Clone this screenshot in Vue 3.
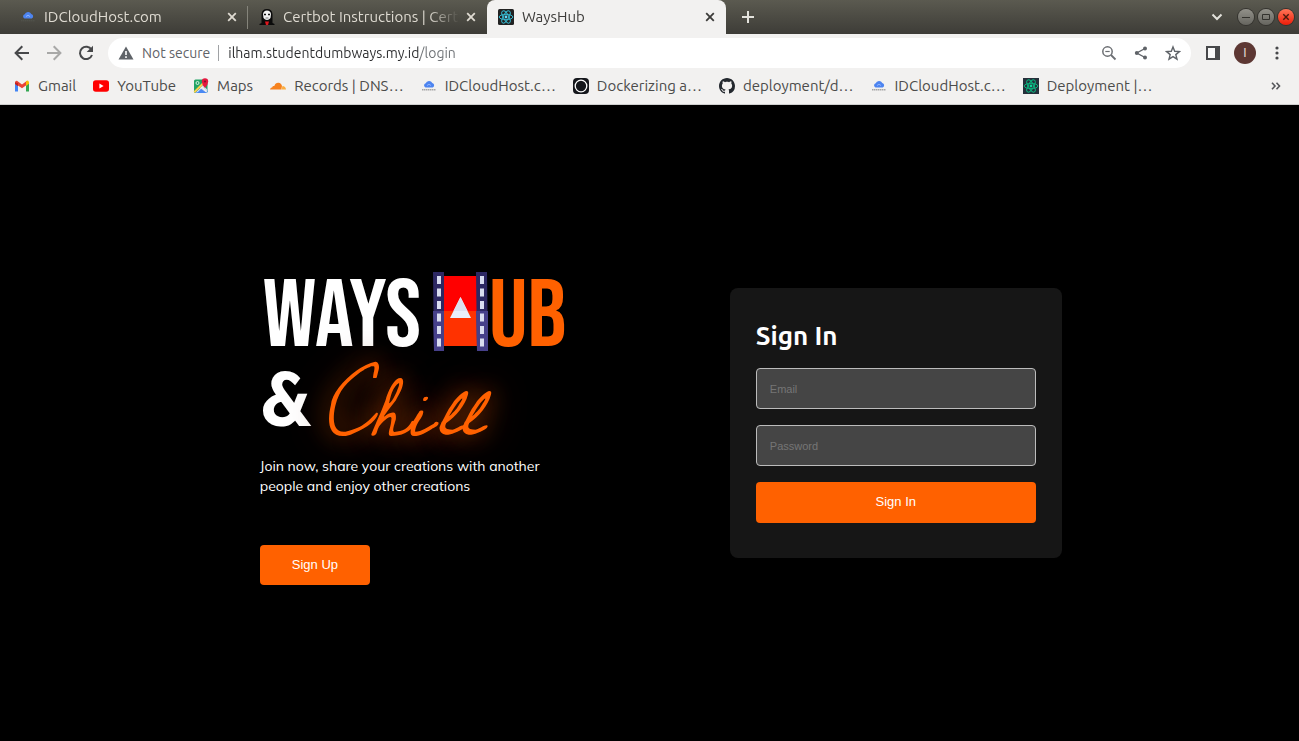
<script setup>
import { ref } from 'vue'

const url = ref('ilham.studentdumbways.my.id/login')
const email = ref('')
const password = ref('')

const tabs = [
  { title: 'IDCloudHost.com', icon: 'cloud', active: false },
  { title: 'Certbot Instructions | Cert', icon: 'certbot', active: false },
  { title: 'WaysHub', icon: 'react', active: true },
]

const bookmarks = [
  { title: 'Gmail', icon: 'gmail' },
  { title: 'YouTube', icon: 'youtube' },
  { title: 'Maps', icon: 'maps' },
  { title: 'Records | DNS…', icon: 'cloudflare' },
  { title: 'IDCloudHost.c…', icon: 'cloud' },
  { title: 'Dockerizing a…', icon: 'ring' },
  { title: 'deployment/d…', icon: 'github' },
  { title: 'IDCloudHost.c…', icon: 'cloud' },
  { title: 'Deployment |…', icon: 'reactgreen' },
]
</script>

<template>
  <div class="window">
    <svg class="defs" width="0" height="0" aria-hidden="true">
      <symbol id="i-cloud" viewBox="0 0 16 16">
        <path d="M4.500 9.500a2.200 2.200 0 0 1 .2-4.200A3.600 3.600 0 0 1 11.300 5a2.400 2.400 0 0 1 .5 4.500z" fill="#4d84f0" />
        <path d="M6 7.500q2-2.500 4 0" fill="none" stroke="#8fb4ff" />
        <path d="M1 11.800h14" stroke="#a5a5a5" stroke-width="1.600" stroke-dasharray="1.500 .5" />
      </symbol>
      <symbol id="i-cloudtab" viewBox="0 0 16 16">
        <path d="M4.500 9.500a2.200 2.200 0 0 1 .2-4.200A3.600 3.600 0 0 1 11.300 5a2.400 2.400 0 0 1 .5 4.500z" fill="#4d84f0" />
        <path d="M6 7.500q2-2.500 4 0" fill="none" stroke="#8fb4ff" />
        <path d="M1 11.800h14" stroke="#55564f" stroke-dasharray="1.500 .5" />
      </symbol>
      <symbol id="i-certbot" viewBox="0 0 16 16">
        <path d="M2.500 14V5Q3 0 8 0t5.500 5v9l2 1v1H.5v-1z" fill="#0b0b0b" />
        <path d="M4 5q.5-3.500 4-3.500T12 5l-.5 4Q10 11 8 11T4.500 9z" fill="#f3f3f3" />
        <path d="M5 5.500h2M9 5.500h2" stroke="#111" stroke-width="1.400" />
        <path d="M6.500 9h3" stroke="#777" />
        <path d="M6 12.500h4l-1 3.500H7z" fill="#e0161c" />
      </symbol>
      <symbol id="i-react" viewBox="0 0 16 16">
        <rect width="16" height="16" rx="1.500" fill="#222" />
        <g fill="none" stroke="#35b9d0">
          <ellipse cx="8" cy="8" rx="6.800" ry="2.700" />
          <ellipse cx="8" cy="8" rx="6.800" ry="2.700" transform="rotate(60 8 8)" />
          <ellipse cx="8" cy="8" rx="6.800" ry="2.700" transform="rotate(120 8 8)" />
        </g>
        <circle cx="8" cy="8" r="1.400" fill="#61dafb" />
      </symbol>
      <symbol id="i-reactgreen" viewBox="0 0 16 16">
        <rect width="16" height="16" fill="#25303b" />
        <g fill="none" stroke="#0bb57f">
          <ellipse cx="8" cy="8" rx="6.800" ry="2.700" />
          <ellipse cx="8" cy="8" rx="6.800" ry="2.700" transform="rotate(60 8 8)" />
          <ellipse cx="8" cy="8" rx="6.800" ry="2.700" transform="rotate(120 8 8)" />
        </g>
        <circle cx="8" cy="8" r="1.400" fill="#10d79a" />
      </symbol>
      <symbol id="i-gmail" viewBox="0 0 16 16">
        <path d="M1 4v9.500h3V7z" fill="#4285f4" />
        <path d="M15 4v9.500h-3V7z" fill="#34a853" />
        <path d="M1 4.500Q1 2.500 3 2.700L8 6.500l5-3.800v4L8 10.300 1 5.500z" fill="#ea4335" />
        <path d="M12 3.400q2.500-2 3 1v1.300l-3 2.200z" fill="#fbbc04" />
        <path d="M1 4.400V6l3 2.200V5z" fill="#c5221f" />
      </symbol>
      <symbol id="i-youtube" viewBox="0 0 16 16">
        <rect y="2.200" width="16" height="11.600" rx="2.800" fill="#f00" />
        <path d="M6.400 5.500v5L10.600 8z" fill="#fff" />
      </symbol>
      <symbol id="i-maps" viewBox="0 0 16 16">
        <rect x="1" y="1.500" width="13.500" height="13.500" rx="1.500" fill="#21a464" />
        <path d="M2 15 10 7l4.500 5v1.500q0 1.500-1.500 1.500z" fill="#4a89f3" />
        <path d="m7 10 3-3 4.500 5-1.300 2.500z" fill="#d9dde3" />
        <path d="M1.300 14.300 13 2.500" stroke="#fbd04a" stroke-width="2" />
        <path d="M3.800 14.500 9 9.300l5 5.200" fill="none" stroke="#fff" />
        <circle cx="4.500" cy="5" r="1.500" fill="none" stroke="#d8f2e4" />
        <path d="M12 10Q8.800 6.500 8.800 3.500a3.200 3.200 0 0 1 6.400 0Q15.200 6.500 12 10z" fill="#e5173f" />
        <circle cx="12" cy="3.500" r="1.100" fill="#86132b" />
      </symbol>
      <symbol id="i-cloudflare" viewBox="0 0 16 16">
        <path d="M0 11.500q.2-2 2.300-2.200.2-1.700 2-1.300Q5.500 4.500 8.500 4.700q2.800.3 3.500 3.300l-.7 3.500z" fill="#f6821f" />
        <path d="M11.500 11.500 12.500 8q3 0 3.500 3.500z" fill="#fbad41" />
      </symbol>
      <symbol id="i-ring" viewBox="0 0 16 16">
        <rect width="16" height="16" rx="4" fill="#15171c" />
        <circle cx="8" cy="8" r="5.800" fill="none" stroke="#fff" stroke-width="1.300" />
      </symbol>
      <symbol id="i-github" viewBox="0 0 16 16">
        <path fill="#24292f" d="M8 0C3.580 0 0 3.580 0 8c0 3.540 2.290 6.530 5.470 7.590.4.070.55-.17.55-.38 0-.19-.01-.82-.01-1.490-2.010.37-2.530-.49-2.690-.94-.09-.23-.48-.94-.82-1.130-.28-.15-.68-.52-.01-.53.63-.01 1.080.58 1.230.82.72 1.210 1.870.87 2.330.66.07-.52.28-.87.51-1.070-1.780-.2-3.640-.89-3.640-3.950 0-.87.31-1.590.82-2.150-.08-.2-.36-1.020.08-2.120 0 0 .67-.21 2.200.82.64-.18 1.320-.27 2-.27s1.360.09 2 .27c1.530-1.040 2.200-.82 2.200-.82.44 1.100.16 1.920.08 2.120.51.56.82 1.270.82 2.150 0 3.070-1.870 3.750-3.650 3.950.29.25.54.73.54 1.480 0 1.070-.01 1.930-.01 2.200 0 .21.15.46.55.38A8.010 8.010 0 0 0 16 8c0-4.420-3.580-8-8-8z" />
      </symbol>
    </svg>

    <header class="browser">
      <div class="tabbar">
        <div v-for="tab in tabs" :key="tab.title" class="tab" :class="{ active: tab.active }">
          <svg class="ico"><use :href="tab.icon === 'cloud' ? '#i-cloudtab' : '#i-' + tab.icon" /></svg>
          <span class="tab-title">{{ tab.title }}</span>
          <button class="close" :aria-label="'Close ' + tab.title">
            <svg width="10" height="10" viewBox="0 0 10 10"><path d="m1.200 1.200 7.600 7.600m0-7.600L1.200 8.800" fill="none" stroke="currentColor" stroke-width="1.800" /></svg>
          </button>
        </div>
        <button class="newtab" aria-label="New tab">
          <svg width="12" height="12" viewBox="0 0 12 12"><path d="M6 0v12M0 6h12" stroke="#e3e2dc" stroke-width="2" /></svg>
        </button>
        <div class="controls">
          <button class="search-tabs" aria-label="Search tabs">
            <svg width="12" height="12" viewBox="0 0 12 12"><path d="m1.500 3.500 4.500 4.500 4.500-4.500" fill="none" stroke="#e3e2dc" stroke-width="2" /></svg>
          </button>
          <button class="win" aria-label="Minimise"><svg width="16" height="16" viewBox="0 0 16 16"><path d="M4 8.500h8" stroke="#33322e" /></svg></button>
          <button class="win" aria-label="Maximise"><svg width="16" height="16" viewBox="0 0 16 16"><path d="M4.500 5.500h7v5h-7z" fill="none" stroke="#33322e" /></svg></button>
          <button class="win quit" aria-label="Close window"><svg width="16" height="16" viewBox="0 0 16 16"><path d="m5.300 5.300 5.400 5.400m0-5.400-5.400 5.400" stroke="#4a1a0c" stroke-width="1.400" /></svg></button>
        </div>
      </div>

      <div class="toolbar">
        <button aria-label="Back"><svg width="20" height="20" viewBox="0 0 20 20"><path d="M17 10H4m6.300-6.700L3.600 10l6.700 6.700" fill="none" stroke="#47484a" stroke-width="2" /></svg></button>
        <button aria-label="Forward"><svg width="20" height="20" viewBox="0 0 20 20"><path d="M3 10h13M9.700 3.300l6.700 6.700-6.700 6.700" fill="none" stroke="#a8a8a7" stroke-width="2" /></svg></button>
        <button aria-label="Reload"><svg width="20" height="20" viewBox="0 0 20 20"><path d="M15.500 6.700A6.200 6.200 0 1 0 16 12" fill="none" stroke="#47484a" stroke-width="2" /><path d="M17 2.700V9h-6.300z" fill="#47484a" /></svg></button>
        <div class="omnibox">
          <svg width="16" height="16" viewBox="0 0 16 16"><path d="M8 1.500 15.500 14.500H.5z" fill="#5f6368" /><path d="M8 6v4m0 1.200v1.800" stroke="#fff" stroke-width="1.600" /></svg>
          <span class="insecure">Not secure</span>
          <input v-model="url" class="url" type="text" aria-label="Address" />
          <button aria-label="Zoom"><svg width="16" height="16" viewBox="0 0 16 16"><circle cx="6.500" cy="6.500" r="4.700" fill="none" stroke="#6c6f73" stroke-width="1.500" /><path d="m10 10 4.500 4.500" stroke="#6c6f73" stroke-width="1.800" /><path d="M4.300 6.500h4.400" stroke="#6c6f73" stroke-width="1.200" /></svg></button>
          <button aria-label="Share"><svg width="16" height="16" viewBox="0 0 16 16"><path d="M12 3.500 3.800 8l8.200 4.500" fill="none" stroke="#5f6368" stroke-width="1.400" /><g fill="#5f6368"><circle cx="12" cy="3.500" r="2" /><circle cx="3.800" cy="8" r="2" /><circle cx="12" cy="12.500" r="2" /></g></svg></button>
          <button aria-label="Bookmark this page"><svg width="16" height="16" viewBox="0 0 16 16"><path d="m8 2 1.700 4.300 4.700.3-3.600 3 1.200 4.500L8 11.600l-4 2.500 1.200-4.500-3.600-3 4.700-.3z" fill="none" stroke="#5f6368" stroke-width="1.400" /></svg></button>
        </div>
        <button aria-label="Side panel"><svg width="20" height="20" viewBox="0 0 20 20"><path d="M3 3h14v14H3z" fill="#47484a" /><path d="M5 5h7v10H5z" fill="#f8f8f8" /></svg></button>
        <button class="avatar" aria-label="Profile">I</button>
        <button aria-label="Menu"><svg width="20" height="20" viewBox="0 0 20 20"><g fill="#47484a"><circle cx="10" cy="5" r="1.600" /><circle cx="10" cy="10" r="1.600" /><circle cx="10" cy="15" r="1.600" /></g></svg></button>
      </div>

      <nav class="bookmarks" aria-label="Bookmarks">
        <a v-for="(b, i) in bookmarks" :key="i" href="#"><svg class="ico"><use :href="'#i-' + b.icon" /></svg><span>{{ b.title }}</span></a>
        <button class="more" aria-label="More bookmarks"><svg width="10" height="8" viewBox="0 0 10 8"><path d="m1 .8 3 3.200-3 3.200M5.500.8l3 3.200-3 3.200" fill="none" stroke="#55565a" stroke-width="1.600" /></svg></button>
      </nav>
    </header>

    <main class="page">
      <section class="intro">
        <h1 class="brand">
          <span class="line">
            <span class="ways">WAYS</span>
            <svg class="film" width="56" height="80" viewBox="0 0 56 80" aria-hidden="true">
              <path d="M11 4h35v70H11z" fill="#f00" />
              <path d="M11 39h35v35H11z" fill="#ff3200" />
              <path d="M0 0h11v79H1zM43 0h11l1 79H44z" fill="#2d2863" />
              <path d="M0 39h11v40H1zM43 39h12v40H44z" fill="#46408a" />
              <path d="M6 4v72M49 4v72" stroke="#d9ddf0" stroke-width="4" stroke-dasharray="8 4.500" />
              <path d="M27.500 25 38 46H17z" fill="#e9effa" />
              <path d="M27.500 25 34.500 39h-14z" fill="#dbe1f0" />
            </svg>
            <span class="ub">UB</span>
          </span>
          <span class="line second"><span class="amp">&amp;</span><span class="chill">Chill</span></span>
        </h1>
        <p class="tagline">Join now, share your creations with another<br />people and enjoy other creations</p>
        <button class="cta">Sign Up</button>
      </section>

      <form class="card" @submit.prevent>
        <h2>Sign In</h2>
        <input v-model="email" type="email" placeholder="Email" aria-label="Email" />
        <input v-model="password" type="password" placeholder="Password" aria-label="Password" />
        <button class="cta" type="submit">Sign In</button>
      </form>
    </main>
  </div>
</template>

<style>
html, body, #app { height: 100%; }
body { margin: 0; background: #000; }
</style>

<style scoped>
.window { min-height: 100%; display: flex; flex-direction: column; background: #000; font-family: Ubuntu, "Noto Sans", sans-serif; font-size: 15px; line-height: 20px; }
.window * { box-sizing: border-box; }
button { border: 0; padding: 0; background: none; display: flex; align-items: center; justify-content: center; flex: none; }
svg { flex: none; display: block; }
.defs { position: absolute; }
.ico { width: 16px; height: 16px; }
.browser { background: #f2f1f0; color: #4b4b4a; }

.tabbar { height: 34px; display: flex; align-items: center; padding: 0 5px 0 9px; background: linear-gradient(#5b5a50, #3d3c37); }
.tab { flex: 0 1 239px; height: 34px; display: flex; align-items: center; gap: 8px; padding: 0 11px; color: #dfdbd2; min-width: 0; }
.tab:first-child { padding-right: 10px; border-right: 1px solid transparent; border-image: linear-gradient(transparent 20%, #85847b 20%, #85847b 82%, transparent 82%) 1; }
.tab.active { background: #f2f1f0; color: #3c3b39; border-radius: 8px 8px 0 0; }
.tab-title { flex: 1; min-width: 0; padding-bottom: 1px; overflow: hidden; white-space: nowrap; mask-image: linear-gradient(to right, #000 145px, transparent 176px); }
.close { color: inherit; width: 10px; height: 20px; }
.newtab { width: 28px; height: 28px; margin-left: 8px; }
.controls { margin-left: auto; display: flex; align-items: center; gap: 4px; }
.search-tabs { width: 28px; height: 28px; margin-right: 3px; }
.win { width: 16px; height: 16px; border-radius: 50%; background: linear-gradient(#92918a, #66655f); box-shadow: 0 0 0 1px #34332f; }
.quit { background: linear-gradient(#ff7658, #ed1c08); }

.toolbar { height: 38px; padding: 4px 12px; display: flex; align-items: center; gap: 12px; }
.toolbar > button { width: 20px; height: 30px; }
.omnibox { flex: 1; height: 30px; display: flex; align-items: center; gap: 16px; padding: 0 10px; border-radius: 15px; background: #fff; font-size: 14px; }
.insecure { margin-left: -8px; padding-right: 8px; line-height: 16px; border-right: 1px solid #a0a2a5; color: #5f6368; white-space: nowrap; }
.url { flex: 1; min-width: 0; height: 26px; margin-left: -7px; padding: 0; border: 0; outline: 0; font: inherit; color: transparent; background: linear-gradient(to right, #2b2c2e 192px, #6c7074 192px); background-clip: text; }
.toolbar > .avatar { width: 22px; height: 22px; margin: 0 -1px; border-radius: 50%; background: #5d3733; color: #e3d9d8; font: 12px "Liberation Sans", sans-serif; }

.bookmarks { height: 33px; display: flex; align-items: center; gap: 17px; padding: 0 18px 4px 14px; border-bottom: 1px solid #cfcfce; }
.bookmarks a { display: flex; align-items: center; gap: 8px; color: inherit; text-decoration: none; white-space: nowrap; }
.bookmarks span { padding-bottom: 1px; }
.more { margin-left: auto; }

.page { flex: 1; display: flex; align-items: center; gap: 164px; padding-left: 20%; }
.intro { width: 306px; padding-top: 10px; }
.brand { margin: 0; font-weight: 400; color: #fff; }
.line { height: 80px; display: flex; align-items: center; justify-content: space-between; }
.ways, .ub { font-family: "Bebas Neue", "Liberation Sans Narrow", sans-serif; font-size: 96px; line-height: 80px; padding-top: 12px; }
.ways { padding-left: 3px; }
.film { margin-left: 12px; }
.ub { color: #ff6100; }
.second { height: 104px; justify-content: flex-start; gap: 8px; }
.amp { font-family: "Josefin Sans", Lato, sans-serif; font-weight: 700; font-size: 72px; line-height: 76px; padding-top: 8px; }
.chill { font-family: "Cedarville Cursive", "Liberation Serif", serif; font-style: italic; font-weight: 400; font-size: 80px; line-height: 76px; padding-top: 16px; color: #ff6100; text-shadow: 0 0 24px #8f3700, 0 0 40px #6b2900; }
.tagline { margin: 0; font-family: Mulish, Lato, sans-serif; font-weight: 400; font-size: 14px; line-height: 20px; color: #fff; white-space: nowrap; }
.cta { height: 41px; padding: 0 32px 2px; border-radius: 4px; background: #ff6100; color: #fff; font: 13px "Liberation Sans", sans-serif; }
.intro .cta { margin-top: 49px; height: 40px; padding-bottom: 0; }

.card { width: 332px; padding: 32px 26px 35px; border-radius: 8px; background: #161616; display: flex; flex-direction: column; gap: 16px; }
.card h2 { margin: 0; color: #fff; font-size: 26px; font-weight: 700; line-height: 32px; }
.card input { width: 100%; height: 41px; padding: 0 13px; border: 1px solid #bcbcbc; border-radius: 4px; outline: 0; background: #454545; color: #fff; font: 11px "Liberation Sans", sans-serif; }
.card input::placeholder { color: #757575; }
</style>
